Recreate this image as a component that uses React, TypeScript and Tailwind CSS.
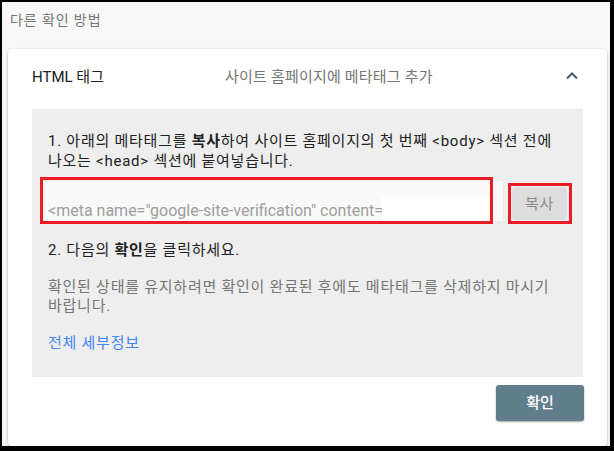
import React from 'react';

function ChevronUp() {
  return (
    <svg width="12" height="8" viewBox="0 0 12 8" className="block">
      <polyline points="1,6.5 6,1.5 11,6.5" fill="none" stroke="#455a64" strokeWidth="2" />
    </svg>
  );
}

function MetaInput() {
  return (
    <div className="relative flex items-start">
      {/* input */}
      <div className="relative -ml-1 mt-[4px] flex h-10 w-[460px] items-end overflow-hidden bg-[#f9f9f9] pl-1 tracking-normal">
        <span className="whitespace-nowrap text-[16px] leading-5 text-[#9e9e9e]">
          &lt;meta name="google-site-verification" content=
        </span>
        <div className="absolute left-[338px] top-4 h-[25px] w-[108px] bg-white" />
      </div>
      {/* copy button */}
      <div className="ml-[9px] mt-[10px] flex h-[33px] w-[55px] items-center justify-center rounded-sm bg-[#dddddd] text-[15px] text-[#8a8a8a]">
        복사
      </div>
      {/* red highlight boxes */}
      <div className="pointer-events-none absolute -left-2 top-0 h-[47px] w-[453px] border-[3px] border-[#ed1c24]" />
      <div className="pointer-events-none absolute left-[460px] top-[6px] h-[41px] w-16 border-[3px] border-[#ed1c24]" />
    </div>
  );
}

export default function App() {
  return (
    <div
      className="h-[451px] w-[614px] bg-black pb-[5px] pl-[2px] pr-[4px] pt-[2px]"
      style={{ fontFamily: '"Roboto", "Noto Sans CJK KR", sans-serif' }}
    >
      <div className="flex h-full flex-col bg-[#f8f8f8]">
        <div className="pl-2 pt-2 text-[14px] leading-5 tracking-[0.9px] text-[#757575]">다른 확인 방법</div>

        <div className="ml-[6px] mr-[3px] mt-[19px] flex-1 rounded-sm bg-white px-6 shadow-[0_1px_3px_rgba(0,0,0,0.3)]">
          {/* header */}
          <div className="flex h-[60px] items-start pt-[18px]">
            <div className="w-[193px] text-[15px] leading-5 text-[#212121]">HTML 태그</div>
            <div className="flex-1 text-[15px] leading-5 tracking-[0.2px] text-[#757575]">사이트 홈페이지에 메타태그 추가</div>
            <div className="mr-[5px] pt-[5px]">
              <ChevronUp />
            </div>
          </div>

          {/* panel */}
          <div className="bg-[#eeeeee] px-4 pb-6 pt-[22px] text-[15px] leading-5 tracking-[0.75px]">
            <p className="text-[#212121]">
              1. 아래의 메타태그를 <b>복사</b>하여 사이트 홈페이지의 첫 번째 &lt;body&gt; 섹션 전에 나오는 &lt;head&gt; 섹션에 붙여넣습니다.
            </p>
            <div className="mt-[6px]">
              <MetaInput />
            </div>
            <p className="mt-[19px] text-[#212121]">
              2. 다음의 <b>확인</b>을 클릭하세요.
            </p>
            <p className="mt-[18px] leading-[19px] text-[#757575]">
              확인된 상태를 유지하려면 확인이 완료된 후에도 메타태그를 삭제하지 마시기 바랍니다.
            </p>
            <p className="mt-[17px] text-[#4285f4]">전체 세부정보</p>
          </div>

          {/* footer */}
          <div className="flex justify-end pt-2">
            <button className="-mr-px h-9 w-[88px] rounded-[3px] bg-[#607d8b] text-[15px] font-medium text-white shadow-[0_1px_2px_rgba(0,0,0,0.35)]">
              확인
            </button>
          </div>
        </div>
      </div>
    </div>
  );
}
